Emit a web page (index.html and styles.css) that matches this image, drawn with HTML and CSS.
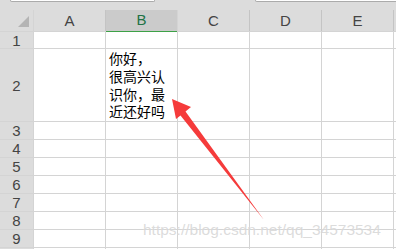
FILE: index.html
```html
<!DOCTYPE html>
<html lang="zh">
<head>
    <meta charset="utf-8">
    <title>Sheet</title>
    <link rel="stylesheet" href="styles.css">
</head>
<body>
    <div class="topbar">
        <div class="box box-left"></div>
        <div class="box box-right"></div>
    </div>
    <div class="sheet">
        <div class="corner"><span class="tri"></span></div>
        <div class="colhead">A</div>
        <div class="colhead sel">B</div>
        <div class="colhead">C</div>
        <div class="colhead">D</div>
        <div class="colhead">E</div>
        <div class="colhead"></div>

        <div class="rowhead">1</div>
        <div class="cell"></div><div class="cell"></div><div class="cell"></div><div class="cell"></div><div class="cell"></div><div class="cell"></div>

        <div class="rowhead">2</div>
        <div class="cell"></div>
        <div class="cell text">
            <span>你好，</span>
            <span>很高兴认</span>
            <span>识你，最</span>
            <span>近还好吗</span>
        </div>
        <div class="cell"></div><div class="cell"></div><div class="cell"></div><div class="cell"></div>

        <div class="rowhead">3</div>
        <div class="cell"></div><div class="cell"></div><div class="cell"></div><div class="cell"></div><div class="cell"></div><div class="cell"></div>
        <div class="rowhead">4</div>
        <div class="cell"></div><div class="cell"></div><div class="cell"></div><div class="cell"></div><div class="cell"></div><div class="cell"></div>
        <div class="rowhead">5</div>
        <div class="cell"></div><div class="cell"></div><div class="cell"></div><div class="cell"></div><div class="cell"></div><div class="cell"></div>
        <div class="rowhead">6</div>
        <div class="cell"></div><div class="cell"></div><div class="cell"></div><div class="cell"></div><div class="cell"></div><div class="cell"></div>
        <div class="rowhead">7</div>
        <div class="cell"></div><div class="cell"></div><div class="cell"></div><div class="cell"></div><div class="cell"></div><div class="cell"></div>
        <div class="rowhead">8</div>
        <div class="cell"></div><div class="cell"></div><div class="cell"></div><div class="cell"></div><div class="cell"></div><div class="cell"></div>
        <div class="rowhead">9</div>
        <div class="cell"></div><div class="cell"></div><div class="cell"></div><div class="cell"></div><div class="cell"></div><div class="cell"></div>
        <div class="rowhead"></div>
        <div class="cell"></div><div class="cell"></div><div class="cell"></div><div class="cell"></div><div class="cell"></div><div class="cell"></div>
    </div>

    <!-- annotation drawn over the sheet -->
    <svg class="arrow" width="396" height="249" viewBox="0 0 396 249">
        <polygon points="172,99 191,107 185.5,111.5 264,220 180.5,115.5 176,119" fill="#f53b3b"/>
    </svg>
    <div class="watermark">https://blog.csdn.net/qq_34573534</div>
</body>
</html>
```

FILE: styles.css
```css
html,
body {
    margin: 0;
    padding: 0;
}

body {
    width: 396px;
    height: 249px;
    overflow: hidden;
    position: relative;
    background: #dcdcdc;
    font-family: "Liberation Sans", Arial, sans-serif;
}

.topbar {
    height: 10px;
    display: flex;
    gap: 100px;
    padding-left: 10px;
}

.box {
    height: 1px;
    background: #ffffff;
    border: 1px solid #ababab;
    border-top: 0;
    border-radius: 0 0 3px 3px;
}

.box-left {
    width: 143px;
}

.box-right {
    flex: 1;
    margin-right: -4px;
}

.sheet {
    display: grid;
    grid-template-columns: 33px repeat(5, 71px) 1fr;
    grid-template-rows: 21px 16px 72px repeat(7, 17px) 1px;
    gap: 1px;
    background: #d4d4d4;
}

.corner {
    background: #dcdcdc;
    position: relative;
}

.tri {
    position: absolute;
    right: 4px;
    bottom: 4px;
    width: 0;
    height: 0;
    border-left: 11px solid transparent;
    border-bottom: 11px solid #b4b4b4;
}

.colhead {
    background: #dcdcdc;
    color: #444;
    font-size: 15px;
    line-height: 21px;
    text-align: center;
    box-shadow: 1px 0 0 #c4c4c4;
}

.colhead.sel {
    background: #cbcbcb;
    color: #217346;
    box-shadow: 0 2px 0 #3da147;
    line-height: 20px;
}

.rowhead {
    background: #dcdcdc;
    color: #444;
    font-size: 15px;
    display: flex;
    align-items: center;
    justify-content: center;
}

.cell {
    background: #ffffff;
}

.text {
    padding: 1px 0 0 3px;
    display: flex;
    flex-direction: column;
    font-family: "Noto Sans CJK SC", sans-serif;
    font-size: 14px;
    color: #000;
    white-space: nowrap;
}

.text span {
    height: 18px;
    line-height: 17px;
}

.arrow {
    position: absolute;
    left: 0;
    top: 0;
}

.watermark {
    position: absolute;
    left: 143px;
    top: 221px;
    font-size: 15.5px;
    color: rgba(190, 190, 190, 0.55);
    text-shadow: 0 0 1px rgba(255, 255, 255, 0.8);
    white-space: nowrap;
}
```
